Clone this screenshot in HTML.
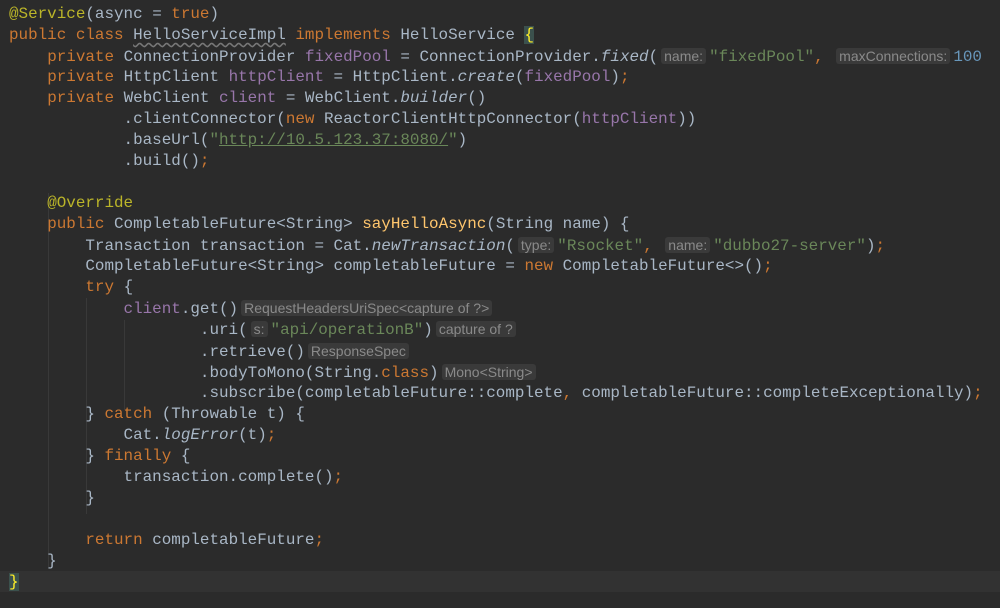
<!DOCTYPE html>
<html><head><meta charset="utf-8"><style>
html,body{margin:0;padding:0;background:#2b2b2b;width:1000px;height:608px;overflow:hidden}
#c{position:absolute;left:9px;top:4px;font-family:"Liberation Mono",monospace;font-size:15.92px;line-height:21.04px;color:#a9b7c6;white-space:pre}
.l{height:21.04px}
.k{color:#cc7832}.f{color:#9876aa}.s{color:#6a8759}.a{color:#bbb529}.n{color:#6897bb}.i{font-style:italic}
.h{font-family:"Liberation Sans",sans-serif;font-size:14px;color:#8a8a8a;background:#3a3a3a;border-radius:3px;padding:0 3px;margin:0 3px}
.u{text-decoration:underline}
.w{text-decoration:underline wavy #777;text-underline-offset:3px}
#cur{position:absolute;left:0;top:571px;width:1000px;height:21px;background:#323232}
.g{position:absolute;width:1px;background:#393939}
</style></head><body>
<div id="cur"></div>
<div class="g" style="left:48px;top:193px;height:374px"></div>
<div class="g" style="left:86px;top:298px;height:216px"></div>
<div class="g" style="left:124px;top:320px;height:90px"></div>
<div id="c"><div class="l"><span class="a">@Service</span>(async = <span class="k">true</span>)</div><div class="l"><span class="k">public class </span><span class="w">HelloServiceImpl</span><span class="k"> implements </span>HelloService <span style="color:#ffef28;background:#3b514d">{</span></div><div class="l">    <span class="k">private </span>ConnectionProvider <span class="f">fixedPool</span> = ConnectionProvider.<span class="i">fixed</span>(<span class="h">name:</span><span class="s">"fixedPool"</span><span class="k">, </span><span class="h">maxConnections:</span><span class="n">100</span></div><div class="l">    <span class="k">private </span>HttpClient <span class="f">httpClient</span> = HttpClient.<span class="i">create</span>(<span class="f">fixedPool</span>)<span class="k">;</span></div><div class="l">    <span class="k">private </span>WebClient <span class="f">client</span> = WebClient.<span class="i">builder</span>()</div><div class="l">            .clientConnector(<span class="k">new </span>ReactorClientHttpConnector(<span class="f">httpClient</span>))</div><div class="l">            .baseUrl(<span class="s">"<span class="u">http://10.5.123.37:8080/</span>"</span>)</div><div class="l">            .build()<span class="k">;</span></div><div class="l"> </div><div class="l">    <span class="a">@Override</span></div><div class="l">    <span class="k">public </span>CompletableFuture&lt;String&gt; <span style="color:#ffc66d">sayHelloAsync</span>(String name) {</div><div class="l">        Transaction transaction = Cat.<span class="i">newTransaction</span>(<span class="h">type:</span><span class="s">"Rsocket"</span><span class="k">, </span><span class="h">name:</span><span class="s">"dubbo27-server"</span>)<span class="k">;</span></div><div class="l">        CompletableFuture&lt;String&gt; completableFuture = <span class="k">new </span>CompletableFuture&lt;&gt;()<span class="k">;</span></div><div class="l">        <span class="k">try </span>{</div><div class="l">            <span class="f">client</span>.get()<span class="h">RequestHeadersUriSpec&lt;capture of ?&gt;</span></div><div class="l">                    .uri(<span class="h">s:</span><span class="s">"api/operationB"</span>)<span class="h">capture of ?</span></div><div class="l">                    .retrieve()<span class="h">ResponseSpec</span></div><div class="l">                    .bodyToMono(String.<span class="k">class</span>)<span class="h">Mono&lt;String&gt;</span></div><div class="l">                    .subscribe(completableFuture::complete<span class="k">, </span>completableFuture::completeExceptionally)<span class="k">;</span></div><div class="l">        } <span class="k">catch </span>(Throwable t) {</div><div class="l">            Cat.<span class="i">logError</span>(t)<span class="k">;</span></div><div class="l">        } <span class="k">finally </span>{</div><div class="l">            transaction.complete()<span class="k">;</span></div><div class="l">        }</div><div class="l"> </div><div class="l">        <span class="k">return </span>completableFuture<span class="k">;</span></div><div class="l">    }</div><div class="l"><span style="color:#ffef28;background:#3b514d">}</span></div></div>
</body></html>
